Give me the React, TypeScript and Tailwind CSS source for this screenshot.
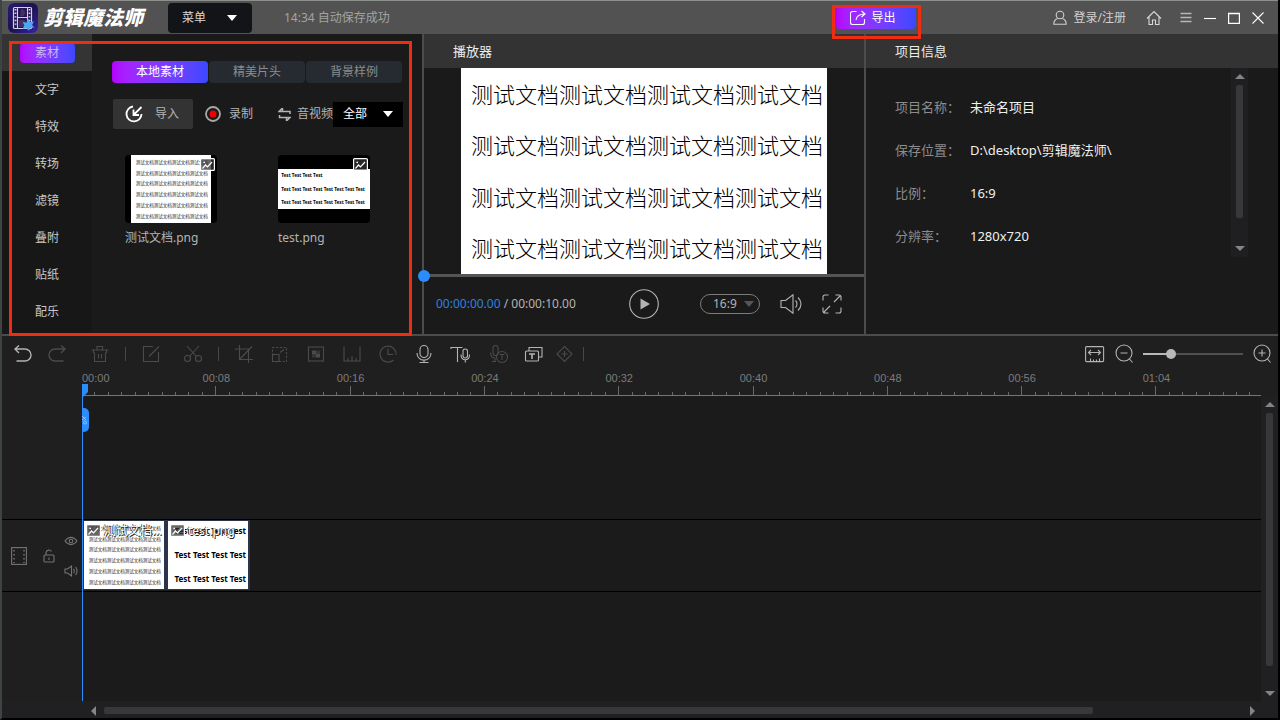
import { useState } from "react";
import type { ReactNode } from "react";

const SIDEBAR = ["素材", "文字", "特效", "转场", "滤镜", "叠附", "贴纸", "配乐"];
const TABS = ["本地素材", "精美片头", "背景样例"];
const INFO = [
  { label: "项目名称：", value: "未命名项目" },
  { label: "保存位置：", value: "D:\\desktop\\剪辑魔法师\\" },
  { label: "比例：", value: "16:9" },
  { label: "分辨率：", value: "1280x720" },
];
const MARKS = ["00:00", "00:08", "00:16", "00:24", "00:32", "00:40", "00:48", "00:56", "01:04"];
const MARK_WIDTH = 134.3;
const DOC_LINE = "测试文档测试文档测试文档测试文档";

type IconProps = { w?: number; h?: number; className?: string; children: ReactNode };

const Icon = ({ w = 24, h = 24, className = "", children }: IconProps) => (
  <svg
    width={w}
    height={h}
    viewBox={`0 0 ${w} ${h}`}
    fill="none"
    stroke="currentColor"
    strokeWidth="1.1"
    className={`shrink-0 ${className}`}
    aria-hidden="true"
  >
    {children}
  </svg>
);

const Caret = ({ className = "" }: { className?: string }) => (
  <svg width="10" height="6" viewBox="0 0 10 6" fill="currentColor" className={className} aria-hidden="true">
    <path d="M0 0h10L5 6z" />
  </svg>
);

const Arrow = ({ dir }: { dir: "up" | "down" | "left" | "right" }) => {
  const paths = {
    up: "M0 5L5 0l5 5z",
    down: "M0 0h10L5 5z",
    left: "M5 0v10L0 5z",
    right: "M0 0v10l5-5z",
  };
  const flat = dir === "up" || dir === "down";
  return (
    <svg
      width={flat ? 10 : 5}
      height={flat ? 5 : 10}
      viewBox={flat ? "0 0 10 5" : "0 0 5 10"}
      className="shrink-0 fill-[#858585]"
      aria-hidden="true"
    >
      <path d={paths[dir]} />
    </svg>
  );
};

const ImageBadge = ({ className = "" }: { className?: string }) => (
  <svg width="15" height="13" viewBox="0 0 15 13" fill="none" stroke="#fff" strokeWidth="1.2" className={className} aria-hidden="true">
    <rect x="0.6" y="0.6" width="13.8" height="11.8" rx="1" fill="#333" fillOpacity="0.75" />
    <circle cx="4.2" cy="4.3" r="0.9" fill="#fff" stroke="none" />
    <path d="M2.5 10.5l3-3.5 2 2 4.5-5" />
  </svg>
);

/* Thumbnails of the two imported pictures */
const DocPicture = () => (
  <svg viewBox="0 0 320 272" className="h-full w-auto bg-white" role="img" aria-label="测试文档.png">
    {[35, 78, 121, 164, 207, 250].map((y) => (
      <text key={y} x="19" y={y} fontSize="18" fill="#222">
        {DOC_LINE}
      </text>
    ))}
  </svg>
);

const TestPicture = () => (
  <svg viewBox="0 0 368 160" className="w-full bg-white" role="img" aria-label="test.png">
    <g fontSize="18.5" fontWeight="700" fill="#000">
      <text x="13" y="32">Test Test Test Test</text>
      <text x="13" y="86">Test Test Test Test Test Test Test Test</text>
      <text x="13" y="140">Test Test Test Test Test Test Test Test</text>
    </g>
  </svg>
);

const TestClipPicture = () => (
  <svg viewBox="0 0 320 272" className="h-full w-auto bg-white" role="img" aria-label="test.png">
    <g fontSize="32" fontWeight="700" fill="#000">
      <text x="26" y="51">Test Test Test Test</text>
      <text x="26" y="147">Test Test Test Test</text>
      <text x="26" y="243">Test Test Test Test</text>
    </g>
  </svg>
);

const Logo = () => (
  <svg width="30" height="30" viewBox="0 0 30 30" aria-hidden="true">
    <defs>
      <linearGradient id="logo" x1="0" y1="0" x2="1" y2="1">
        <stop offset="0" stopColor="#2a1a7a" />
        <stop offset="0.5" stopColor="#1d1150" />
        <stop offset="1" stopColor="#3a22a8" />
      </linearGradient>
    </defs>
    <rect width="30" height="30" rx="6" fill="url(#logo)" />
    <rect x="5.5" y="4.5" width="18" height="21" rx="1" fill="#241552" stroke="#cfd0ee" strokeWidth="1.2" />
    <path d="M9.5 4.5v21M19.5 4.5v21M9.5 14.5h10" stroke="#cfd0ee" strokeWidth="1.1" />
    <path d="M7.5 6v18M21.5 6v18" stroke="#cfd0ee" strokeWidth="1.8" strokeDasharray="1.4 2.2" />
    <path d="M13 6c4 0 5 3 3 7h-4zM11 17h6v7h-6z" fill="#43305f" />
    <path d="M20 15.500l2 3.500 4-.5-2 3.500 2.500 2.500-4 .3-1.500 3-2.500-2.500-4 .8 1.800-3.500-1.500-3.500 3.700.4z" fill="#4ea6f2" />
  </svg>
);

type Tool = { name: string; on?: boolean; small?: boolean; icon: ReactNode };

const TRACK_TOOLS: Tool[] = [
  {
    name: "裁剪",
    icon: <path d="M3 7h13.500V21M7.500 3v14.500H21M7.500 17.500L20 4.500" />,
  },
  {
    name: "缩放",
    icon: (
      <>
        <rect x="4.500" y="5.500" width="14" height="14" strokeDasharray="2.200 1.500" />
        <path d="M4.500 12.500h6.500v7H4.500zM12 10.500l4-3" />
      </>
    ),
  },
  {
    name: "马赛克",
    icon: (
      <>
        <rect x="4.500" y="5" width="15" height="14" />
        <path d="M8 8.500h4V12H8zM12 12h4v3.500h-4z" fill="currentColor" stroke="none" />
        <path d="M12 8.500h4V12h-4zM8 12h4v3.500H8z" fill="currentColor" fillOpacity="0.5" stroke="none" />
      </>
    ),
  },
  { name: "定格", icon: <path d="M4 4.500v14.500h16V4.500M8 18.500v-2.500M12 18.500V14M16 18.500v-2.500" /> },
  {
    name: "时长",
    icon: (
      <>
        <path d="M17.500 18A8 8 0 1 1 20 13" />
        <path d="M12 6.500v6h5" />
      </>
    ),
  },
  {
    name: "录音",
    on: true,
    icon: (
      <>
        <rect x="8" y="3.500" width="8" height="12" rx="4" />
        <path d="M5 11c0 9.500 14 9.500 14 0M12 18v2.500M7.500 20.500h9" />
      </>
    ),
  },
  {
    name: "文字转语音",
    on: true,
    icon: (
      <>
        <path d="M3 5.500h11.500M9.500 5.500V20M3 5v2" />
        <rect x="15" y="7" width="4.500" height="9" rx="2.200" />
        <path d="M13 12.500c0 7 8.500 7 8.500 0M17.300 18v2.500" />
      </>
    ),
  },
  {
    name: "语音转文字",
    icon: (
      <>
        <rect x="9" y="3.500" width="5" height="10" rx="2.500" />
        <path d="M6.500 10.500c0 4 2 5.500 5 5.500M11 16v3.500M8 19.500h4" />
        <circle cx="18" cy="15" r="5.500" />
        <path d="M15.500 12.500h5M18 12.500v5.500" />
      </>
    ),
  },
  {
    name: "字幕",
    on: true,
    icon: (
      <>
        <path d="M9 9V5.500h13V15h-3" />
        <rect x="5.500" y="9" width="13" height="10" rx="1" />
        <path d="M9 12h6M12 12v5" strokeWidth="1.600" />
      </>
    ),
  },
  {
    name: "关键帧",
    small: true,
    icon: <path d="M13.500 4.500l7.500 7.500-7.500 7.500L6 12zM10.500 12h6M13.500 9v6" />,
  },
];

const ToolButton = ({ tool }: { tool: Tool }) => (
  <button
    type="button"
    aria-label={tool.name}
    className={`flex h-8 items-center justify-center ${tool.small ? "w-[26px]" : "w-9"} ${
      tool.on ? "text-[#b4b4b4]" : "text-[#4b4b4b]"
    }`}
  >
    <Icon>{tool.icon}</Icon>
  </button>
);

const Separator = () => <span className="mx-[7px] h-3.5 w-px bg-[#484848]" />;

const TitleBar = () => (
  <header className="flex h-[34px] items-center border-t border-[#8b908d] bg-[#525252] pr-3.5 pl-1.5">
    <Logo />
    <h1 className="ml-[5px] w-[105px] text-[20px] leading-7 font-black whitespace-nowrap text-white italic">剪辑魔法师</h1>
    <button
      type="button"
      aria-haspopup="menu"
      className="ml-5 flex h-[30px] w-[84px] items-center justify-between rounded-sm bg-[#121417] pr-[15px] pl-3.5 text-[#d8d8d8]"
    >
      菜单
      <Caret className="text-white" />
    </button>
    <p className="ml-8 text-[#a3a3a3]">14:34 自动保存成功</p>

    <div className="relative mr-[137px] ml-auto">
      <button
        type="button"
        className="flex h-[22px] w-20 items-center gap-1.5 rounded bg-linear-to-r from-[#b400ff] to-[#3a48ff] pl-3.5 text-white"
      >
        <Icon w={16} h={16}>
          <path d="M6.500 1.500H2.500a2 2 0 0 0-2 2v9a2 2 0 0 0 2 2h10a2 2 0 0 0 2-2V9M6 10c.5-4 3-6 9-6M11.500 1L15 4l-3.500 3" />
        </Icon>
        导出
      </button>
      {/* highlight around the export button */}
      <span className="pointer-events-none absolute -top-0.5 -right-[5px] z-10 h-[34px] w-[89px] border-3 border-[#f02d10]" />
    </div>

    <button type="button" className="flex items-center gap-[7px] text-[#d0d0d0]">
      <Icon w={14} h={16}>
        <circle cx="7" cy="5" r="3.800" />
        <path d="M4.500 8.500C2 9.500.8 11.500.8 14.200h12.400c0-2.700-1.200-4.700-3.700-5.700" />
      </Icon>
      登录/注册
    </button>
    <button type="button" aria-label="主页" className="ml-5 text-[#d8d8d8]">
      <Icon w={16} h={16}>
        <path d="M1 8.500L8 1.500l7 7M3 7v7.500h3.500V10h3v4.500H13V7" />
      </Icon>
    </button>
    <button type="button" aria-label="更多" className="ml-[18px] text-[#b8b8b8]">
      <Icon w={12} h={12}>
        <path d="M.5 1.500h11M.5 5.500h11M.5 9.500h11" strokeWidth="1.400" />
      </Icon>
    </button>
    <button type="button" aria-label="最小化" className="ml-3 text-white">
      <Icon w={12} h={12}>
        <path d="M0 6.500h12" />
      </Icon>
    </button>
    <button type="button" aria-label="最大化" className="ml-3 text-white">
      <Icon w={12} h={12}>
        <path d="M.5 1v10.500h11V1M0 1.500h12" strokeWidth="1.400" />
      </Icon>
    </button>
    <button type="button" aria-label="关闭" className="ml-3 text-white">
      <Icon w={12} h={12}>
        <path d="M.5.5l11 11M11.500.5l-11 11" />
      </Icon>
    </button>
  </header>
);

const MediaPanel = () => {
  const [tab, setTab] = useState(TABS[0]);

  return (
    <section className="relative flex">
      <nav className="w-[90px] shrink-0 bg-[#171717] pb-1">
        {SIDEBAR.map((item, i) => (
          <button
            key={item}
            type="button"
            className={`flex h-[37px] w-full items-center justify-center ${i === 0 ? "bg-[#343434]" : ""}`}
          >
            <span
              className={
                i === 0
                  ? "w-[55px] rounded bg-linear-to-r from-[#b400ff] to-[#3a48ff] leading-5 text-[#c9b8f5]"
                  : "text-[#c8c8c8]"
              }
            >
              {item}
            </span>
          </button>
        ))}
      </nav>

      <div className="flex-1 pt-[27px] pl-5">
        <div className="flex gap-px">
          {TABS.map((t) => (
            <button
              key={t}
              type="button"
              onClick={() => setTab(t)}
              className={`h-[22px] w-24 rounded ${
                t === tab ? "bg-linear-to-r from-[#b400ff] to-[#3a48ff] text-white" : "bg-[#252b31] text-[#8d8d8d]"
              }`}
            >
              {t}
            </button>
          ))}
        </div>

        <div className="mt-4 flex items-center pl-px text-[#b4b4b4]">
          <button type="button" className="flex h-[30px] w-20 items-center gap-3 rounded-xs bg-[#333] pl-3">
            <Icon w={18} h={18} className="text-white">
              <path d="M8 1.500A7.500 7.500 0 1 0 16.500 9M16.500 2L9 9.500M8.500 4.500v5.500H14" strokeWidth="1.800" />
            </Icon>
            导入
          </button>
          <button type="button" className="ml-3 flex items-center gap-2">
            <Icon w={16} h={16}>
              <circle cx="8" cy="8" r="7" stroke="#a8a8a8" strokeWidth="1.800" />
              <circle cx="8" cy="8" r="3.500" fill="#f00000" stroke="none" />
            </Icon>
            录制
          </button>
          <label htmlFor="media-type" className="ml-[25px] flex items-center gap-1.5">
            <Icon w={13} h={13}>
              <path d="M4.500 0v3.500H12v2.500M4.500 0L1 3.500h4M8.500 13V9.500H1.500V7M8.500 13L12 9.500H8" strokeWidth="1.500" />
            </Icon>
            音视频
          </label>
          <div className="relative flex items-center">
            <select id="media-type" className="h-[25px] w-[70px] appearance-none bg-black pl-2.5 text-white outline-none">
              <option>全部</option>
            </select>
            <Caret className="pointer-events-none absolute right-2.5 text-white" />
          </div>
        </div>

        <div className="mt-[26px] flex gap-[61px] pl-[13px] text-[#b4b4b4]">
          <figure className="w-[92px]">
            <div className="relative flex h-[68px] justify-center overflow-hidden rounded-sm bg-black">
              <DocPicture />
              <ImageBadge className="absolute top-[3px] right-0.5" />
            </div>
            <figcaption className="mt-[5px] leading-5">测试文档.png</figcaption>
          </figure>
          <figure className="w-[92px]">
            <div className="relative flex h-[68px] items-center overflow-hidden rounded-sm bg-black">
              <TestPicture />
              <ImageBadge className="absolute top-[3px] right-0.5" />
            </div>
            <figcaption className="mt-[5px] leading-5">test.png</figcaption>
          </figure>
        </div>
      </div>

      {/* highlight around the media area */}
      <span className="pointer-events-none absolute top-[7px] right-2.5 -bottom-0.5 left-[7px] z-10 border-3 border-[#f02d10]" />
    </section>
  );
};

const Player = () => (
  <section className="flex flex-col border-l-2 border-[#4c4c4c]">
    <h2 className="bg-[#333] pl-[29px] text-[13px] leading-[34px] text-[#ececec]">播放器</h2>
    <div className="flex h-[206px] justify-center">
      <div className="grid aspect-video h-full grid-rows-4 items-center justify-center bg-white pl-1.5 text-[22px] leading-8 font-light whitespace-nowrap text-black">
        {[0, 1, 2, 3].map((n) => (
          <p key={n}>{DOC_LINE}</p>
        ))}
      </div>
    </div>
    <div className="relative h-[3px] bg-[#555]">
      <input
        type="range"
        aria-label="播放进度"
        defaultValue={0}
        className="absolute -top-1 -left-1.5 h-3 w-full appearance-none bg-transparent [&::-webkit-slider-thumb]:size-3 [&::-webkit-slider-thumb]:appearance-none [&::-webkit-slider-thumb]:rounded-full [&::-webkit-slider-thumb]:bg-[#2a8cff]"
      />
    </div>
    <div className="grid flex-1 grid-cols-[1fr_auto_1fr] items-center pr-[22px] pb-1 pl-3 text-[#b4b4b4]">
      <p>
        <span className="text-[#2f80e0]">00:00:00.00</span> / 00:00:10.00
      </p>
      <button type="button" aria-label="播放" className="ml-2.5">
        <Icon w={30} h={30}>
          <circle cx="15" cy="15" r="14.300" />
          <path d="M11.500 9.500v11l9.500-5.500z" fill="currentColor" stroke="none" />
        </Icon>
      </button>
      <div className="flex items-center justify-end gap-5">
        <div className="relative flex items-center">
          <select
            aria-label="画面比例"
            className="h-5 w-[60px] appearance-none rounded-full border border-[#7c7c7c] bg-transparent pl-3 outline-none"
          >
            <option>16:9</option>
          </select>
          <Caret className="pointer-events-none absolute right-1.5 text-[#555]" />
        </div>
        <button type="button" aria-label="音量">
          <Icon w={22} h={20}>
            <path d="M1 6.500h4.500L13 .8v18.400l-7.500-5.700H1zM15.500 6.500c2 2 2 5 0 7M18 3.500c4 4 4 9 0 13" />
          </Icon>
        </button>
        <button type="button" aria-label="全屏">
          <Icon w={20} h={20}>
            <path d="M1 6.500V3a2 2 0 0 1 2-2h3.500M13.500 1H17a2 2 0 0 1 2 2v3.500M19 13.500V17a2 2 0 0 1-2 2h-3.500M6.500 19H3a2 2 0 0 1-2-2v-3.500M12 8l6-6M8 12l-6 6" />
          </Icon>
        </button>
      </div>
    </div>
  </section>
);

const ProjectInfo = () => (
  <section className="flex flex-col border-l-2 border-[#4c4c4c] text-[13px]">
    <h2 className="bg-[#333] pl-[29px] leading-[34px] text-[#ececec]">项目信息</h2>
    <div className="flex h-[189px] pr-[30px]">
      <dl className="flex-1 pt-[18px] pl-[29px]">
        {INFO.map((row) => (
          <div key={row.label} className="flex h-[43px] items-center">
            <dt className="w-[75px] text-[#8c8c8c]">{row.label}</dt>
            <dd className="text-[#f0f0f0]">{row.value}</dd>
          </div>
        ))}
      </dl>
      <div className="flex w-[17px] flex-col items-center bg-[#1f1e20] py-1.5">
        <Arrow dir="up" />
        <span className="mt-1.5 mb-auto h-[133px] w-[7px] rounded-xs bg-[#38373a]" />
        <Arrow dir="down" />
      </div>
    </div>
  </section>
);

const Toolbar = () => (
  <div className="flex h-9 items-center pr-[7px] pl-1 text-[#4b4b4b]">
    <button type="button" aria-label="撤销" className="flex w-[34px] justify-center text-[#b4b4b4]">
      <Icon>
        <path d="M8 3.500L4 7l4 4M4 7h10a6 6 0 0 1 0 12H5.500" strokeWidth="1.400" />
      </Icon>
    </button>
    <button type="button" aria-label="重做" className="flex w-[34px] justify-center">
      <Icon>
        <path d="M16 3.500L20 7l-4 4M20 7H10a6 6 0 0 0 0 12h8.500" strokeWidth="1.400" />
      </Icon>
    </button>
    <button type="button" aria-label="删除" className="ml-2 flex w-9 justify-center">
      <Icon>
        <path d="M3.500 8h17M9 8V4.500h5.500V8M5.500 8v3M18.500 8v3M6.500 10.500v9h11v-9M10.500 12v4.500M13.500 12v4.500" />
      </Icon>
    </button>
    <Separator />
    <button type="button" aria-label="编辑" className="flex w-9 justify-center">
      <Icon>
        <path d="M14 4.500H4.500v15h15V10M10 14.500L20 4.500" />
      </Icon>
    </button>
    <button type="button" aria-label="分割" className="ml-1.5 flex w-9 justify-center">
      <Icon>
        <circle cx="6.500" cy="16.500" r="3" />
        <circle cx="17.500" cy="16.500" r="3" />
        <path d="M8.500 14.500L18 4M15.500 14.500L6 4" />
      </Icon>
    </button>
    <Separator />
    {TRACK_TOOLS.map((tool) => (
      <ToolButton key={tool.name} tool={tool} />
    ))}
    <Separator />

    <div className="ml-auto flex items-center text-[#b4b4b4]">
      <button type="button" aria-label="适应窗口">
        <Icon w={20} h={18}>
          <rect x="0.600" y="1.600" width="18" height="15" rx="1" />
          <path d="M3.500 7.500h12M6 5L3.500 7.500 6 10M13 5l2.500 2.500L13 10M5.500 16.500v-3M8.500 16.500v-2M11.500 16.500v-2M14.500 16.500v-3" />
        </Icon>
      </button>
      <button type="button" aria-label="缩小" className="ml-2.5">
        <Icon w={18} h={20}>
          <circle cx="9" cy="9" r="8" />
          <path d="M5.500 9h7M14.500 15l3 3.500" />
        </Icon>
      </button>
      <input
        type="range"
        aria-label="时间轴缩放"
        defaultValue={26}
        className="mx-2.5 h-0.5 w-[100px] appearance-none bg-[linear-gradient(to_right,#b8b8b8_29%,#505050_29%)] [&::-webkit-slider-thumb]:size-2.5 [&::-webkit-slider-thumb]:appearance-none [&::-webkit-slider-thumb]:rounded-full [&::-webkit-slider-thumb]:bg-[#b8b8b8]"
      />
      <button type="button" aria-label="放大">
        <Icon w={18} h={20}>
          <circle cx="9" cy="9" r="8" />
          <path d="M5.500 9h7M9 5.500v7M14.500 15l3 3.500" />
        </Icon>
      </button>
    </div>
  </div>
);

const Ruler = () => {
  const ticks = Array.from({ length: 88 }, (_, i) => i);
  return (
    <svg className="block h-6 w-full overflow-hidden font-['Liberation_Sans',sans-serif]" aria-label="时间标尺">
      {MARKS.map((mark, i) => (
        <text key={mark} x={i * MARK_WIDTH} y="10" fontSize="11" textAnchor={i === 0 ? "start" : "middle"} fill="#7c7c7c">
          {mark}
        </text>
      ))}
      {ticks.slice(1).map((i) => {
        const x = Math.floor((i * MARK_WIDTH) / 10 - 0.5) + 0.5;
        return <path key={i} d={`M${x} ${i % 10 === 0 ? 14 : 20}V24`} stroke="#686868" />;
      })}
      <path d="M0 23.500h4000" stroke="#747474" />
    </svg>
  );
};

const Clip = ({ name, children }: { name: string; children: ReactNode }) => (
  <div className="relative h-[70px] w-[84px] border-x-2 border-y border-[#2b3448]">
    {children}
    <div className="absolute top-0 left-0.5 flex items-center gap-[3px]">
      <ImageBadge className="shrink-0" />
      <span className="leading-5 whitespace-nowrap text-white [text-shadow:1px_1px_0_#222,-1px_0_0_#444]">{name}</span>
    </div>
  </div>
);

const Timeline = () => (
  <section className="flex flex-1 flex-col border-t-2 border-[#4c4c4c] bg-[#1f1f1f]">
    <Toolbar />
    <div className="flex flex-1">
      <div className="flex min-w-0 flex-1 flex-col">
        <div className="pl-20">
          <Ruler />
        </div>
        <div className="relative flex flex-1 flex-col">
          <div className="flex flex-[9]">
            <div className="w-20" />
            <div className="flex-1 bg-[#1b1b1b]" />
          </div>
          <div className="flex h-[73px] border-y border-black">
            <div className="flex w-20 items-center justify-between pt-px pr-1 pl-[9px] text-[#747474]">
              <Icon w={16} h={18}>
                <rect x="0.600" y="0.600" width="14.800" height="16.800" />
                <path d="M3 3v13M13 3v13" strokeWidth="1.500" strokeDasharray="1.500 2.500" />
              </Icon>
              <button type="button" aria-label="锁定轨道" className="ml-[7px]">
                <Icon w={12} h={14}>
                  <rect x="1" y="6" width="10" height="7" rx="1" />
                  <path d="M3 6V3.500a3 3 0 0 1 5.500-1M6 8.500v2.500" />
                </Icon>
              </button>
              <div className="flex flex-col gap-4">
                <button type="button" aria-label="显示轨道">
                  <Icon w={14} h={14}>
                    <path d="M1 7c3.500-4.800 8.500-4.800 12 0-3.500 4.800-8.500 4.800-12 0z" />
                    <circle cx="7" cy="7" r="1.800" />
                  </Icon>
                </button>
                <button type="button" aria-label="轨道静音">
                  <Icon w={14} h={14}>
                    <path d="M1 5h2.500L7.500 2v10l-4-3H1zM9.500 5c1 1 1 3 0 4M11.500 3c2 2.500 2 5.500 0 8" />
                  </Icon>
                </button>
              </div>
            </div>
            <div className="flex flex-1 bg-[#1b1b1b]">
              <Clip name="测试文档...">
                <DocPicture />
              </Clip>
              <Clip name="test.png">
                <TestClipPicture />
              </Clip>
            </div>
          </div>
          <div className="flex flex-[8]">
            <div className="w-20" />
            <div className="flex-1 bg-[#1b1b1b]" />
          </div>

          {/* playhead */}
          <div className="absolute -top-3 bottom-0 left-20 border-l border-[#2a8cff]">
            <svg width="6" height="13" viewBox="0 0 6 13" className="absolute top-0 left-0 -ml-px fill-[#2a8cff]" aria-hidden="true">
              <path d="M0 0h6v8l-5 5H0z" />
            </svg>
            <svg width="7" height="24" viewBox="0 0 7 24" className="absolute top-6 left-0 -ml-px" aria-hidden="true">
              <path d="M0 0h2a5 5 0 0 1 5 5v14a5 5 0 0 1-5 5H0z" fill="#2a8cff" />
              <path d="M0 8l4 4M0 12l4-3" stroke="#8cc2ff" fill="none" />
              <circle cx="3" cy="14.500" r="1.500" stroke="#8cc2ff" fill="none" />
            </svg>
          </div>
        </div>
      </div>
      <div className="mt-6 flex w-[17px] flex-col items-center bg-[#201f21] pt-1.5 pb-[5px]">
        <Arrow dir="up" />
        <span className="mt-1.5 mb-[25px] w-[7px] flex-1 rounded-xs bg-[#38373a]" />
        <Arrow dir="down" />
      </div>
    </div>
    <div className="flex h-[17px] items-center bg-[#201f21] pt-0.5 pr-[23px] pl-[89px]">
      <Arrow dir="left" />
      <span className="mr-auto ml-2 h-[7px] w-[85%] rounded-xs bg-[#38373a]" />
      <Arrow dir="right" />
    </div>
  </section>
);

export default function App() {
  return (
    <div className="flex min-h-screen flex-col border-x-2 border-b-2 border-r-black border-b-black border-l-[#3e4441] bg-[#1a1a1a] font-['Noto_Sans','Noto_Sans_CJK_SC',sans-serif] text-xs">
      <TitleBar />
      <main className="flex flex-1 flex-col">
        <div className="grid grid-cols-[420fr_442fr_414fr]">
          <MediaPanel />
          <Player />
          <ProjectInfo />
        </div>
        <Timeline />
      </main>
    </div>
  );
}
